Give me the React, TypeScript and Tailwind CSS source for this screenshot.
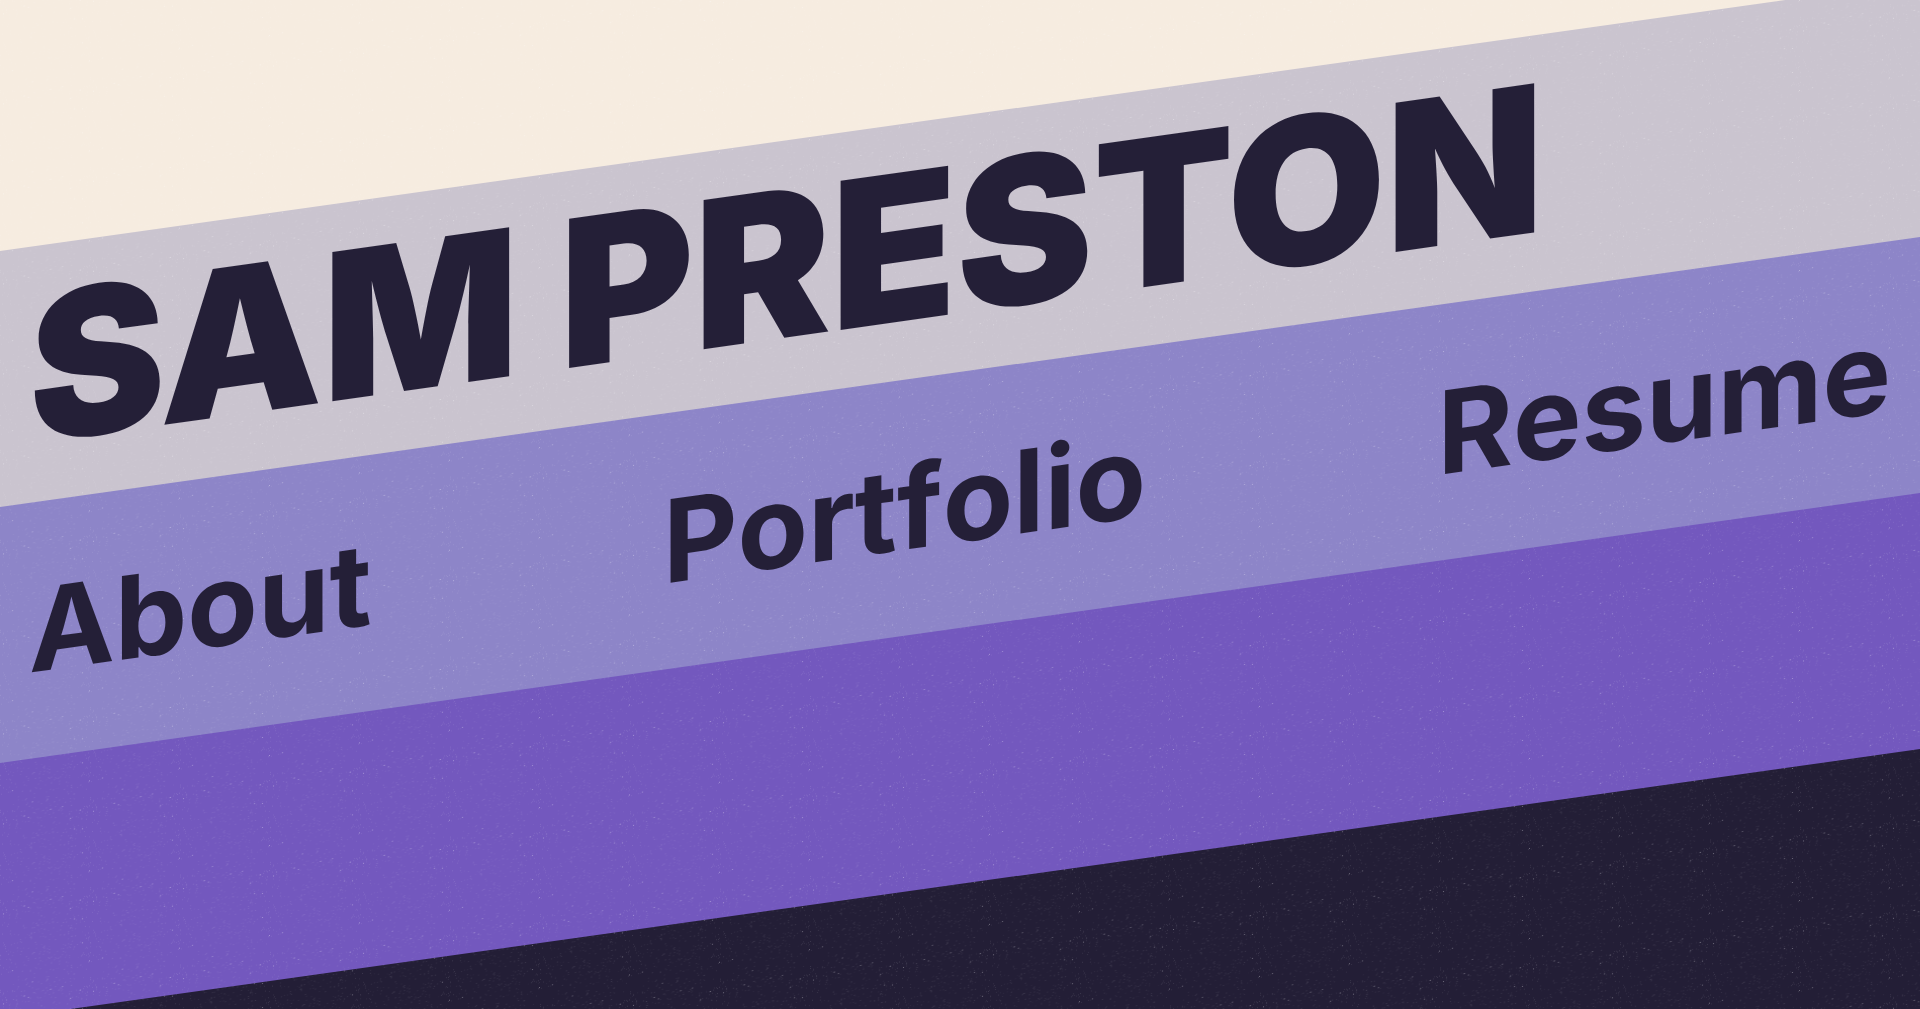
const links = ['About', 'Portfolio', 'Resume'];

// Seeded generator (mulberry32), so the grain is the same on each load.
function makeSpecks(count: number, width: number, height: number, seed: number) {
  let state = seed;
  const next = () => {
    state = (state + 0x6d2b79f5) | 0;
    let t = Math.imul(state ^ (state >>> 15), 1 | state);
    t = (t + Math.imul(t ^ (t >>> 7), 61 | t)) ^ t;
    return ((t ^ (t >>> 14)) >>> 0) / 4294967296;
  };
  return Array.from({ length: count }, () => {
    const x = Math.floor(next() * width);
    const y = Math.floor(next() * height);
    const strength = next();
    return { x, y, opacity: strength > 0.965 ? 0.35 : 0.02 + strength * 0.1 };
  });
}

const specks = makeSpecks(420, 90, 90, 21);

function Grain() {
  return (
    <svg className="pointer-events-none absolute inset-0 h-full w-full" aria-hidden="true">
      <defs>
        <pattern id="grain" width="90" height="90" patternUnits="userSpaceOnUse">
          {specks.map((s, i) => (
            <rect key={i} x={s.x} y={s.y} width="1" height="1" fill="#ffffff" opacity={s.opacity} />
          ))}
        </pattern>
      </defs>
      <rect width="100%" height="100%" fill="url(#grain)" />
    </svg>
  );
}

export default function App() {
  return (
    <div className="h-screen overflow-hidden bg-[#241f37] font-['Inter',sans-serif] text-[#241f37]">
      <div className="relative -mt-[140px] flex h-[127vh] -skew-y-8 flex-col">
        <div className="-mb-px flex-1 bg-[#f6ece0]" />
        <header className="-mb-px flex flex-1 items-center bg-[#cac4cf] px-[29px]">
          <h1 className="relative z-10 pb-3 text-[205px] leading-none font-black whitespace-nowrap">SAM PRESTON</h1>
        </header>
        <nav
          className="-mb-px flex flex-1 items-center justify-between bg-[#8d85c8] px-[29px] [font-kerning:none]"
          aria-label="Main"
        >
          {links.map((label) => (
            <a
              key={label}
              href={`#${label.toLowerCase()}`}
              className="relative z-10 text-[115px] leading-none font-bold"
            >
              {label}
            </a>
          ))}
        </nav>
        <div className="-mb-px flex-1 bg-[#7358be]" />
        <div className="flex-1 bg-[#231e36]" />
        <Grain />
      </div>
    </div>
  );
}
